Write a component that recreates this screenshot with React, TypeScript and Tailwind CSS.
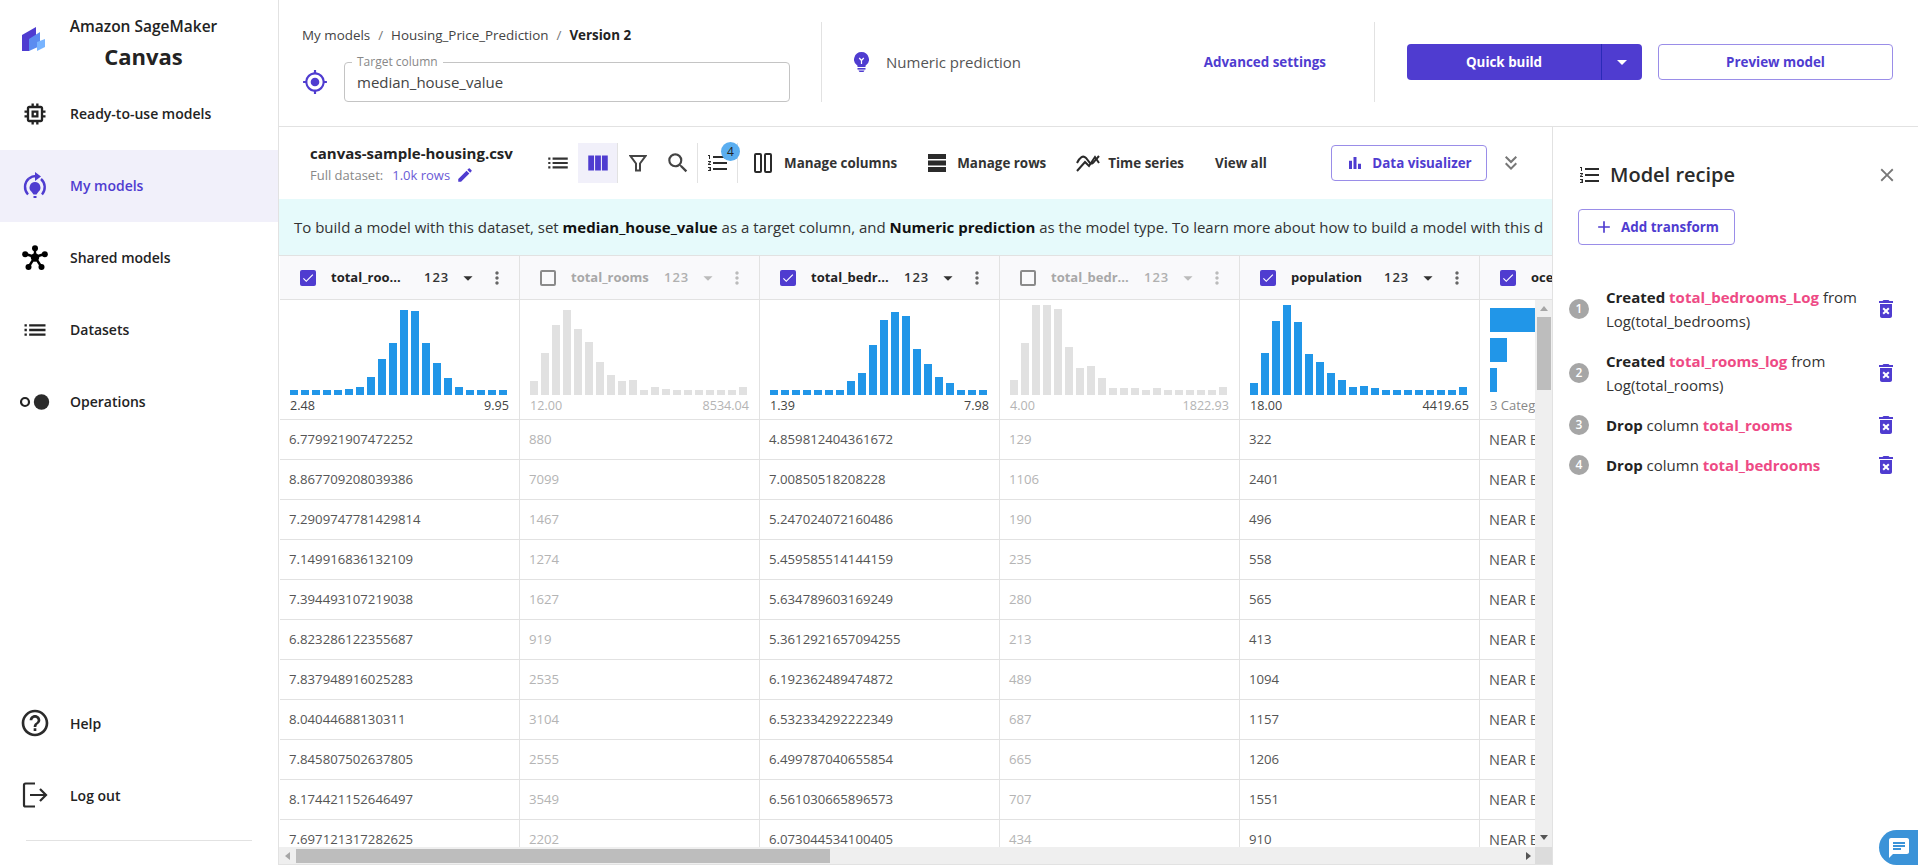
import React from 'react';
import {
  MdAdd, MdArrowDropDown, MdBarChart, MdChat, MdCheck, MdClose, MdDeleteForever, MdEdit,
  MdFormatListNumbered, MdGpsFixed, MdHelpOutline, MdKeyboardDoubleArrowDown, MdList, MdMoreVert,
  MdOutlineMemory, MdSearch, MdViewColumn,
} from 'react-icons/md';

const FONT = 'font-["Open_Sans",sans-serif]';

interface Column {
  name: string;
  active: boolean;
  bars: number[];
  min: string;
  max: string;
  values: string[];
}

const columns: Column[] = [
  {
    name: 'total_roo...', active: true, min: '2.48', max: '9.95',
    bars: [5, 5, 5, 5, 5, 6, 8, 18, 36, 52, 85, 84, 52, 32, 17, 8, 5, 5, 5, 5],
    values: ['6.779921907472252', '8.867709208039386', '7.2909747781429814', '7.149916836132109', '7.394493107219038', '6.823286122355687', '7.837948916025283', '8.04044688130311', '7.845807502637805', '8.174421152646497', '7.697121317282625'],
  },
  {
    name: 'total_rooms', active: false, min: '12.00', max: '8534.04',
    bars: [14, 42, 70, 85, 66, 53, 33, 20, 14, 15, 5, 8, 6, 5, 5, 5, 5, 5, 5, 8],
    values: ['880', '7099', '1467', '1274', '1627', '919', '2535', '3104', '2555', '3549', '2202'],
  },
  {
    name: 'total_bedr...', active: true, min: '1.39', max: '7.98',
    bars: [5, 5, 5, 5, 5, 5, 5, 14, 22, 50, 75, 83, 79, 46, 31, 18, 12, 5, 5, 5],
    values: ['4.859812404361672', '7.00850518208228', '5.247024072160486', '5.459585514144159', '5.634789603169249', '5.3612921657094255', '6.192362489474872', '6.532334292222349', '6.499787040655854', '6.561030665896573', '6.073044534100405'],
  },
  {
    name: 'total_bedr...', active: false, min: '4.00', max: '1822.93',
    bars: [15, 52, 90, 90, 86, 48, 27, 29, 17, 7, 7, 7, 5, 7, 5, 5, 5, 5, 5, 8],
    values: ['129', '1106', '190', '235', '280', '213', '489', '687', '665', '707', '434'],
  },
  {
    name: 'population', active: true, min: '18.00', max: '4419.65',
    bars: [12, 42, 74, 90, 73, 41, 33, 22, 15, 8, 9, 7, 5, 5, 5, 5, 5, 5, 5, 8],
    values: ['322', '2401', '496', '558', '565', '413', '1094', '1157', '1206', '1551', '910'],
  },
];

const navItems = [
  { label: 'Ready-to-use models', icon: <MdOutlineMemory size={28} className="text-[#232323]" /> },
  { label: 'My models', icon: <MyModelsIcon />, active: true },
  { label: 'Shared models', icon: <SharedIcon /> },
  { label: 'Datasets', icon: <MdList size={28} className="text-[#232323]" /> },
  { label: 'Operations', icon: <OperationsIcon /> },
];

function LogoIcon() {
  return (
    <svg width="25" height="26" viewBox="0 0 25 26">
      <path d="M1 9 L15 1 V15 L8 25 H1 Z" fill="#4f3cd0" />
      <path d="M8 13 L19 6 V20 L8 25 Z" fill="#5b8cf0" />
      <path d="M16 16 L24 13 V21 L16 25 Z" fill="#78b4ff" />
    </svg>
  );
}

function MyModelsIcon() {
  return (
    <svg width="28" height="28" viewBox="0 0 28 28" fill="none">
      <path d="M8 6.5 A11 11 0 0 0 7 22.5" stroke="#4f3cd0" strokeWidth="2.4" />
      <path d="M20 7 A11 11 0 0 1 21 22.5" stroke="#4f3cd0" strokeWidth="2.4" />
      <path d="M8 6.5 A11 11 0 0 1 15 4" stroke="#4f3cd0" strokeWidth="2.4" />
      <path d="M14 0 L20 4.5 L14 9 Z" fill="#4f3cd0" />
      <path d="M14 10 a5.5 5.5 0 0 1 3.5 9.7 L15.5 22.5 h-3 L10.5 19.7 A5.5 5.5 0 0 1 14 10 Z" fill="#4f3cd0" />
      <rect x="12.5" y="24" width="3" height="2" fill="#4f3cd0" />
    </svg>
  );
}

function SharedIcon() {
  return (
    <svg width="26" height="26" viewBox="0 0 26 26" fill="#000">
      <g stroke="#000" strokeWidth="2.4">
        <path d="M13 12 V3" />
        <path d="M13 12 L3.5 9" />
        <path d="M13 12 L22.5 9" />
        <path d="M13 12 L6.5 22" />
        <path d="M13 12 L19.5 22" />
      </g>
      <circle cx="13" cy="12.5" r="4.2" />
      <circle cx="13" cy="3.2" r="3" />
      <circle cx="3.2" cy="9.2" r="3" />
      <circle cx="22.8" cy="9.2" r="3" />
      <circle cx="6.5" cy="22" r="3" />
      <circle cx="19.5" cy="22" r="3" />
    </svg>
  );
}

function OperationsIcon() {
  return (
    <svg width="30" height="16" viewBox="0 0 30 16" fill="none">
      <circle cx="5" cy="8" r="4" stroke="#232323" strokeWidth="2.2" />
      <circle cx="21.5" cy="8" r="7.7" fill="#2b2b2b" />
    </svg>
  );
}

function LogoutIcon() {
  return (
    <svg width="26" height="26" viewBox="0 0 26 26" fill="none" stroke="#2b2b2b" strokeWidth="2.2">
      <path d="M13 1.5 H3.5 a1.5 1.5 0 0 0 -1.5 1.5 V23 a1.5 1.5 0 0 0 1.5 1.5 H13" />
      <path d="M8 13 H24 M18 7 L24 13 L18 19" />
    </svg>
  );
}

function BulbIcon() {
  return (
    <svg width="15" height="20" viewBox="0 0 15 20">
      <path d="M7.5 0 A7.5 7.5 0 0 1 11.5 13.8 V15 H3.5 V13.8 A7.5 7.5 0 0 1 7.5 0 Z" fill="#4f3cd0" />
      <path d="M5.2 6 L7.5 8.5 L9.8 6 M7.5 8.5 V12" stroke="#fff" strokeWidth="1.2" fill="none" />
      <rect x="3.5" y="16" width="8" height="1.6" fill="#4f3cd0" />
      <path d="M4.5 18.4 H10.5 L9.5 20 H5.5 Z" fill="#4f3cd0" />
    </svg>
  );
}

function FilterIcon() {
  return (
    <svg width="18" height="18" viewBox="0 0 18 18" fill="none" stroke="#444" strokeWidth="2">
      <path d="M1.5 2 H16.5 L11 9.5 V16.5 H7 V9.5 Z" />
    </svg>
  );
}

function TwoColumnsIcon() {
  return (
    <svg width="18" height="20" viewBox="0 0 18 20" fill="none" stroke="#2b2b2b" strokeWidth="2">
      <rect x="1" y="1" width="6" height="18" rx="1" />
      <rect x="11" y="1" width="6" height="18" rx="1" />
    </svg>
  );
}

function RowsIcon() {
  return (
    <svg width="18" height="18" viewBox="0 0 18 18" fill="#2b2b2b">
      <rect width="18" height="5" />
      <rect y="6.5" width="18" height="5" />
      <rect y="13" width="18" height="5" />
    </svg>
  );
}

function TimeSeriesIcon() {
  return (
    <svg width="24" height="18" viewBox="0 0 24 18" fill="none" stroke="#2b2b2b" strokeWidth="2">
      <path d="M1 9 C4 3 7 1 10 4 L14 9 C16 11 18 8 23 2" />
      <path d="M1 17 L9 8 L13 12 L19 3 L23 9" />
    </svg>
  );
}

function Histogram({ col }: { col: Column }) {
  return (
    <div className="h-[120px] border-b border-[#e2e2e2] pt-[5px] pl-[10px]">
      <div className="flex h-[90px] items-end gap-[3px]">
        {col.bars.map((h, i) => (
          <div
            key={i}
            className={`w-[8px] ${col.active ? 'bg-[#2196e8]' : 'bg-[#e1e1e1]'}`}
            style={{ height: h }}
          />
        ))}
      </div>
      <div className={`mt-[1px] flex w-[219px] justify-between text-[12.6px] leading-[20px] ${col.active ? 'text-[#444]' : 'text-[#b4b4b4]'}`}>
        <span>{col.min}</span>
        <span>{col.max}</span>
      </div>
    </div>
  );
}

function ColumnHeader({ col }: { col: Column }) {
  return (
    <div className="flex h-[44px] items-center border-b border-[#e2e2e2] bg-[#f9f9fb] pl-[20px]">
      {col.active ? (
        <div className="flex h-[16px] w-[16px] items-center justify-center rounded-[2px] bg-[#4f3cd0]">
          <MdCheck size={14} className="text-white" />
        </div>
      ) : (
        <div className="h-[16px] w-[16px] rounded-[2px] border-2 border-[#8a8a8a]" />
      )}
      <span className={`ml-[15px] w-[93px] shrink-0 whitespace-nowrap text-[13px] font-bold ${col.active ? 'text-[#232323]' : 'text-[#a8a8a8]'}`}>
        {col.name}
      </span>
      <span className={`text-[13px] font-semibold tracking-[1px] ${col.active ? 'text-[#333]' : 'text-[#b0b0b0]'}`}>123</span>
      <MdArrowDropDown size={22} className={`ml-[8px] ${col.active ? 'text-[#333]' : 'text-[#bbb]'}`} />
      <MdMoreVert size={20} className={`ml-[8px] ${col.active ? 'text-[#666]' : 'text-[#bbb]'}`} />
    </div>
  );
}

function DataColumn({ col }: { col: Column }) {
  return (
    <div className="w-[240px] shrink-0 border-r border-[#e2e2e2]">
      <ColumnHeader col={col} />
      <Histogram col={col} />
      {col.values.map((v) => (
        <div key={v} className={`flex h-[40px] items-center border-b border-[#e2e2e2] pl-[9px] text-[13.2px] ${col.active ? 'text-[#555]' : 'text-[#b4b4b4]'}`}>
          {v}
        </div>
      ))}
    </div>
  );
}

function CategoryColumn() {
  return (
    <div className="w-[240px] shrink-0">
      <ColumnHeader col={{ name: 'ocean_proximity', active: true, bars: [], min: '', max: '', values: [] }} />
      <div className="h-[120px] border-b border-[#e2e2e2] pt-[8px] pl-[10px]">
        <div className="flex flex-col gap-[6px]">
          <div className="h-[24px] w-[46px] bg-[#2196e8]" />
          <div className="h-[24px] w-[17px] bg-[#2196e8]" />
          <div className="h-[24px] w-[7px] bg-[#2196e8]" />
        </div>
        <div className="mt-[3px] whitespace-nowrap text-[13px] leading-[20px] text-[#888]">3 Categories</div>
      </div>
      {Array.from({ length: 11 }).map((_, i) => (
        <div key={i} className="flex h-[40px] items-center border-b border-[#e2e2e2] pl-[9px] text-[14.5px] text-[#555]">
          NEAR BAY
        </div>
      ))}
    </div>
  );
}

function RecipeStep({ n, children }: { n: number; children: React.ReactNode }) {
  return (
    <div className="ml-[-9px] flex items-center">
      <div className="flex h-[20px] w-[20px] shrink-0 items-center justify-center rounded-full bg-[#a6a6a6] text-[12px] font-semibold text-white">{n}</div>
      <div className="ml-[17px] w-[268px] text-[15px] leading-[24px] text-[#333]">{children}</div>
      <MdDeleteForever size={24} className="text-[#4f3cd0]" />
    </div>
  );
}

const Pink = ({ children }: { children: React.ReactNode }) => (
  <span className="font-bold text-[#ee4a85]">{children}</span>
);

const Sidebar = () => (
  <aside className="flex w-[279px] shrink-0 flex-col border-r border-[#e2e2e2]">
    <div className="flex h-[78px] items-center pl-[21px]">
      <LogoIcon />
      <div className="ml-[22px] flex w-[151px] flex-col items-center pt-[7px]">
        <span className="whitespace-nowrap text-[15.5px] leading-[26px] font-semibold text-[#232323]">Amazon SageMaker</span>
        <span className="text-[22px] leading-[34px] font-bold text-[#232323]">Canvas</span>
      </div>
    </div>
    {navItems.map((item) => (
      <div key={item.label} className={`flex h-[72px] items-center pb-[1px] ${item.active ? 'bg-[#f1f0fa]' : ''}`}>
        <div className="flex w-[70px] items-center justify-center">{item.icon}</div>
        <span className={`text-[14px] font-semibold ${item.active ? 'text-[#4f3cd0]' : 'text-[#232323]'}`}>{item.label}</span>
      </div>
    ))}
    <div className="flex-1" />
    <div className="flex h-[73px] items-center pb-[3px]">
      <div className="flex w-[70px] justify-center"><MdHelpOutline size={32} className="text-[#2b2b2b]" /></div>
      <span className="text-[14px] font-semibold text-[#232323]">Help</span>
    </div>
    <div className="flex h-[73px] items-center pb-[5px]">
      <div className="flex w-[70px] justify-center"><LogoutIcon /></div>
      <span className="text-[14px] font-semibold text-[#232323]">Log out</span>
    </div>
    <div className="mx-[26px] mt-[6px] mb-[24px] border-t border-[#e2e2e2]" />
  </aside>
);

const TopBar = () => (
  <header className="flex h-[127px] items-center border-b border-[#e2e2e2] pb-[2px]">
    <div className="w-[542px] shrink-0 self-start pt-[25px] pl-[23px]">
      <div className="flex h-[20px] items-center whitespace-nowrap text-[13.4px] text-[#444]">
        <span>My models</span>
        <span className="mx-[8px] text-[#777]">/</span>
        <span>Housing_Price_Prediction</span>
        <span className="mx-[8px] text-[#777]">/</span>
        <span className="font-bold text-[#232323]">Version 2</span>
      </div>
      <div className="mt-[17px] flex items-center">
        <MdGpsFixed size={26} className="text-[#4f3cd0]" />
        <div className="relative ml-[16px] flex h-[40px] w-[446px] items-center rounded-[4px] border border-[#c4c4c4] pl-[12px] text-[15px] text-[#444]">
          <span className="absolute top-[-9px] left-[7px] bg-white px-[5px] text-[12px] leading-[16px] text-[#888]">Target column</span>
          median_house_value
        </div>
      </div>
    </div>
    <div className="h-[80px] self-center border-l border-[#e2e2e2]" />
    <div className="ml-[32px] flex w-[520px] shrink-0 items-center">
      <BulbIcon />
      <span className="ml-[17px] text-[15px] text-[#555]">Numeric prediction</span>
      <span className="ml-auto mr-[48px] text-[13.4px] font-bold text-[#4f3cd0]">Advanced settings</span>
    </div>
    <div className="h-[80px] border-l border-[#e2e2e2]" />
    <div className="ml-[32px] flex h-[36px] w-[235px] items-center rounded-[4px] bg-[#4f3cd0] text-white">
      <span className="w-[194px] text-center text-[13.4px] font-bold">Quick build</span>
      <div className="flex h-full flex-1 items-center justify-center border-l border-[#2a2ab8]">
        <MdArrowDropDown size={24} />
      </div>
    </div>
    <div className="ml-[16px] flex h-[36px] w-[235px] items-center justify-center rounded-[4px] border border-[#9a8de8] text-[13.4px] font-bold text-[#4f3cd0]">
      Preview model
    </div>
  </header>
);

const Toolbar = () => (
  <div className="flex h-[72px] items-center pr-[29px]">
    <div className="w-[259px] shrink-0 pt-[2px] pl-[31px]">
      <div className="whitespace-nowrap text-[15px] leading-[22px] font-bold text-[#232323]">canvas-sample-housing.csv</div>
      <div className="flex items-center whitespace-nowrap text-[13px] leading-[23px] text-[#888]">
        Full dataset:
        <span className="ml-[9px] text-[#6b5bd6]">1.0k rows</span>
        <MdEdit size={18} className="ml-[6px] text-[#4f3cd0]" />
      </div>
    </div>
    <div className="flex h-[40px] w-[40px] items-center justify-center"><MdList size={26} className="text-[#333]" /></div>
    <div className="flex h-[40px] w-[40px] items-center justify-center border-r border-[#e2e2e2] bg-[#f1f0fa]"><MdViewColumn size={26} className="text-[#4f3cd0]" /></div>
    <div className="flex h-[40px] w-[40px] items-center justify-center"><FilterIcon /></div>
    <div className="flex h-[40px] w-[40px] items-center justify-center border-r border-[#e2e2e2]"><MdSearch size={26} className="text-[#444]" /></div>
    <div className="relative flex h-[40px] w-[40px] items-center justify-center border-r border-[#e2e2e2]">
      <MdFormatListNumbered size={24} className="text-[#2b2b2b]" />
      <span className="absolute top-[-1px] left-[23px] flex h-[19px] w-[19px] items-center justify-center rounded-full bg-[#5aaef0] text-[12px] text-[#232323]">4</span>
    </div>
    <div className="ml-[16px] flex items-center"><TwoColumnsIcon /></div>
    <span className="ml-[12px] whitespace-nowrap text-[13.4px] font-bold text-[#333]">Manage columns</span>
    <div className="ml-[31px] flex items-center"><RowsIcon /></div>
    <span className="ml-[11px] whitespace-nowrap text-[13.4px] font-bold text-[#333]">Manage rows</span>
    <div className="ml-[30px] flex items-center"><TimeSeriesIcon /></div>
    <span className="ml-[8px] whitespace-nowrap text-[13.4px] font-bold text-[#333]">Time series</span>
    <span className="ml-[31px] whitespace-nowrap text-[13.4px] font-bold text-[#333]">View all</span>
    <div className="ml-auto flex h-[36px] w-[156px] items-center justify-center rounded-[4px] border border-[#9a8de8] text-[13.4px] font-bold text-[#4f3cd0]">
      <MdBarChart size={18} className="mr-[8px]" />
      Data visualizer
    </div>
    <MdKeyboardDoubleArrowDown size={24} className="ml-[12px] text-[#777]" />
  </div>
);

const Scrollbars = () => (
  <div className="absolute top-[44px] right-0 bottom-0 flex w-[17px] flex-col items-center bg-[#efefef]">
    <div className="mt-[6px] h-0 w-0 border-x-[4px] border-b-[5px] border-x-transparent border-b-[#a6a6a6]" />
    <div className="mt-[6px] h-[73px] w-[14px] bg-[#bdbdbd]" />
    <div className="mt-auto mb-[7px] h-0 w-0 border-x-[4px] border-t-[5px] border-x-transparent border-t-[#555]" />
  </div>
);

const DataTable = () => (
  <div className="flex min-h-0 flex-1 flex-col">
    <div className="relative min-h-0 flex-1 overflow-hidden border-t border-[#e2e2e2]">
      <div className="ml-[1px] flex w-[1440px]">
        {columns.map((c, i) => (
          <DataColumn key={i} col={c} />
        ))}
        <CategoryColumn />
      </div>
      <Scrollbars />
    </div>
    <div className="flex h-[18px] shrink-0 items-center border-b border-[#e2e2e2] bg-[#efefef]">
      <div className="ml-[6px] h-0 w-0 border-y-[4px] border-r-[5px] border-y-transparent border-r-[#a6a6a6]" />
      <div className="ml-[6px] h-[14px] w-[534px] bg-[#bdbdbd]" />
      <div className="ml-auto mr-[4px] h-0 w-0 border-y-[4px] border-l-[5px] border-y-transparent border-l-[#555]" />
      <div className="h-full w-[17px] bg-[#dcdcdc]" />
    </div>
  </div>
);

const RecipePanel = () => (
  <aside className="flex-1 px-[25px] pt-[35px]">
    <div className="flex h-[26px] items-center">
      <MdFormatListNumbered size={24} className="text-[#2b2b2b]" />
      <span className="ml-[8px] text-[20px] font-semibold text-[#2b2b2b]">Model recipe</span>
      <MdClose size={22} className="ml-auto text-[#777]" />
    </div>
    <div className="mt-[21px] flex h-[36px] w-[157px] items-center justify-center rounded-[4px] border border-[#9a8de8] text-[13.4px] font-bold text-[#4f3cd0]">
      <MdAdd size={20} className="mr-[7px]" />
      Add transform
    </div>
    <div className="mt-[40px] flex flex-col gap-[16px]">
      <RecipeStep n={1}><b className="text-[#232323]">Created</b> <Pink>total_bedrooms_Log</Pink> from Log(total_bedrooms)</RecipeStep>
      <RecipeStep n={2}><b className="text-[#232323]">Created</b> <Pink>total_rooms_log</Pink> from Log(total_rooms)</RecipeStep>
      <RecipeStep n={3}><b className="text-[#232323]">Drop</b> column <Pink>total_rooms</Pink></RecipeStep>
      <RecipeStep n={4}><b className="text-[#232323]">Drop</b> column <Pink>total_bedrooms</Pink></RecipeStep>
    </div>
  </aside>
);

const App = () => {
  return (
    <div className={`relative flex h-[865px] w-[1918px] overflow-hidden bg-white ${FONT}`}>
      <Sidebar />
      <div className="flex min-w-0 flex-1 flex-col">
        <TopBar />
        <div className="flex min-h-0 flex-1">
          <main className="flex w-[1274px] shrink-0 flex-col border-r border-[#e2e2e2]">
            <Toolbar />
            <div className="flex h-[56px] shrink-0 items-center overflow-hidden bg-[#e6fafb] pl-[15px] whitespace-nowrap text-[15px] text-[#333]">
              <span>To build a model with this dataset, set <b className="text-[#111]">median_house_value</b> as a target column, and <b className="text-[#111]">Numeric prediction</b> as the model type. To learn more about how to build a model with this d</span>
            </div>
            <DataTable />
          </main>
          <RecipePanel />
        </div>
      </div>
      <div className="absolute right-0 bottom-0 flex h-[35px] w-[39px] items-center justify-center rounded-tl-[18px] rounded-bl-[18px] bg-[#3b93d8]">
        <MdChat size={24} className="text-white" />
      </div>
    </div>
  );
};

export default App;
